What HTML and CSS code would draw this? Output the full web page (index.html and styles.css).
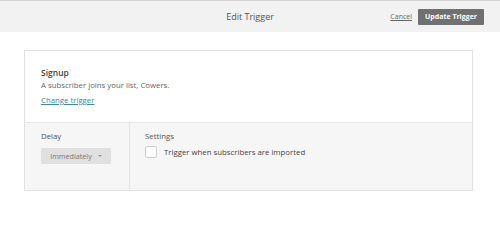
FILE: index.html
```html
<!DOCTYPE html>
<html lang="en">
<head>
  <meta charset="UTF-8">
  <title>Edit Trigger</title>
  <link rel="stylesheet" href="styles.css">
</head>
<body>
  <div class="header">
    <div></div>
    <h1 class="title">Edit Trigger</h1>
    <div class="actions">
      <a href="#" class="cancel">Cancel</a>
      <button class="button" type="button">Update Trigger</button>
    </div>
  </div>

  <div class="card">
    <div class="trigger">
      <h2>Signup</h2>
      <p>A subscriber joins your list, Cowers.</p>
      <a href="#" class="change">Change trigger</a>
    </div>
    <div class="options">
      <div class="delay">
        <h3>Delay</h3>
        <div class="select">Immediately <span class="caret"></span></div>
      </div>
      <div class="settings">
        <h3>Settings</h3>
        <label class="check"><span class="box"></span>Trigger when subscribers are imported</label>
      </div>
    </div>
  </div>
</body>
</html>
```

FILE: styles.css
```css
* {
  margin: 0;
  padding: 0;
  box-sizing: border-box;
}

body {
  font-family: 'Open Sans', sans-serif;
  background-color: #fff;
  color: #555;
  width: 500px;
  height: 240px;
  overflow: hidden;
}

.header {
  display: grid;
  grid-template-columns: 1fr auto 1fr;
  align-items: center;
  height: 32px;
  background-color: #f2f2f2;
  border-top: 1px solid #d4d4d4;
}

.title {
  font-size: 9px;
  font-weight: 400;
  color: #555;
}

.actions {
  display: flex;
  justify-content: flex-end;
  align-items: center;
  gap: 6px;
  padding-right: 16px;
}

.cancel {
  font-size: 7px;
  color: #666;
}

.button {
  font-family: 'Open Sans', sans-serif;
  background-color: #707070;
  color: #fff;
  border: none;
  border-radius: 1px;
  width: 66px;
  height: 16px;
  font-size: 7px;
  font-weight: 700;
}

.card {
  margin: 18px 0 0 24px;
  width: 449px;
  border: 1px solid #e1e1e1;
}

.trigger {
  background-color: #fff;
  padding: 16px 16px 14px;
  border-bottom: 1px solid #e6e6e6;
  height: 72px;
}

.trigger h2 {
  font-size: 8.5px;
  font-weight: 600;
  color: #444;
  line-height: 12px;
}

.trigger p {
  font-size: 7.8px;
  color: #666;
  line-height: 13px;
}

.change {
  display: block;
  width: max-content;
  margin-top: 2px;
  font-size: 7.8px;
  line-height: 12px;
  color: #3c8aa8;
}

.options {
  display: flex;
  background-color: #f6f6f6;
  height: 67px;
}

.options h3 {
  font-size: 7.8px;
  font-weight: 400;
  color: #555;
  line-height: 12px;
}

.delay {
  width: 105px;
  padding: 7px 16px;
  border-right: 1px solid #e3e3e3;
}

.select {
  display: flex;
  align-items: center;
  justify-content: center;
  gap: 6px;
  margin-top: 6px;
  width: 70px;
  height: 16px;
  background-color: #e0e0e0;
  border-radius: 1px;
  font-size: 7.2px;
  color: #777;
}

.caret {
  width: 0;
  height: 0;
  border-left: 2px solid transparent;
  border-right: 2px solid transparent;
  border-top: 2px solid #999;
}

.settings {
  padding: 7px 15px;
}

.check {
  display: flex;
  align-items: center;
  gap: 7px;
  margin-top: 4px;
  font-size: 7.8px;
  color: #444;
}

.box {
  width: 12px;
  height: 12px;
  background-color: #fff;
  border: 1px solid #cfcfcf;
  border-radius: 2px;
}
```
